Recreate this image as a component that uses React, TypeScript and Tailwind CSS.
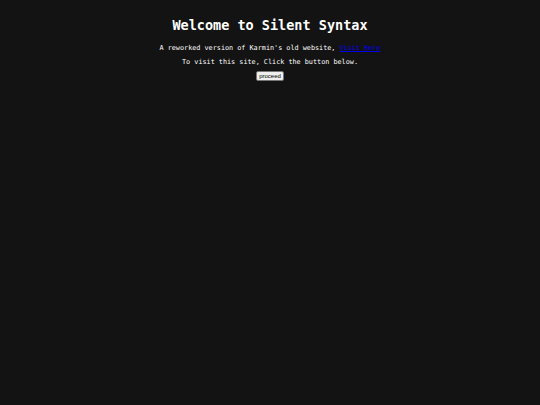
export default function App() {
  return (
    <div className="min-h-[405px] w-full bg-[#131313] text-white flex flex-col items-center" style={{ fontFamily: '"DejaVu Sans Mono", monospace' }}>
      <h1 className="text-[13.5px] font-bold mt-[17px] leading-[16px]">Welcome to Silent Syntax</h1>
      <p className="text-[6.8px] mt-[11px] leading-[9px]">
        A reworked version of Karmin's old website, <a href="#" className="text-[#0000ee] underline">Visit Here</a>
      </p>
      <p className="text-[6.8px] mt-[5px] leading-[9px]">To visit this site, Click the button below.</p>
      <button className="mt-[4px] bg-[#efefef] text-black text-[6px] leading-[7px] px-[2px] py-[0.5px] border border-[#767676] rounded-[2px]" style={{ fontFamily: '"Liberation Sans", Arial, sans-serif' }}>proceed</button>
    </div>
  );
}
